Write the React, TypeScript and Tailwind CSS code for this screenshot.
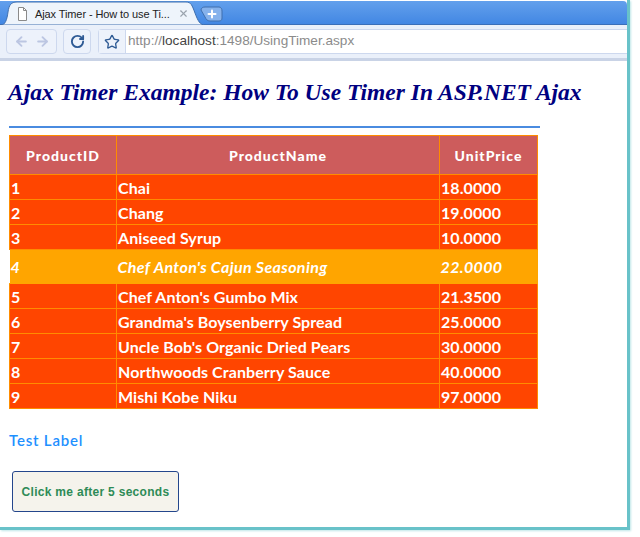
import { ArrowLeft, ArrowRight, RotateCw, Star, X, Plus } from 'lucide-react';

const rows = [
    { id: 1, name: 'Chai', price: '18.0000' },
    { id: 2, name: 'Chang', price: '19.0000' },
    { id: 3, name: 'Aniseed Syrup', price: '10.0000' },
    { id: 4, name: "Chef Anton's Cajun Seasoning", price: '22.0000', selected: true },
    { id: 5, name: "Chef Anton's Gumbo Mix", price: '21.3500' },
    { id: 6, name: "Grandma's Boysenberry Spread", price: '25.0000' },
    { id: 7, name: "Uncle Bob's Organic Dried Pears", price: '30.0000' },
    { id: 8, name: 'Northwoods Cranberry Sauce', price: '40.0000' },
    { id: 9, name: 'Mishi Kobe Niku', price: '97.0000' },
];

const comic = "font-['Lato','Open_Sans',sans-serif]";
const headCell = 'border border-[#ff8c00] text-center font-black text-[14px] tracking-[1px]';

function Browser() {
    return (
        <div className="shrink-0">
            {/* Tab strip */}
            <div className="relative h-[24px] mt-px rounded-tr-sm bg-gradient-to-b from-[#63a0ec] to-[#4287e3] border-b border-[#3a6fb8]">
                <svg className="absolute left-0 top-0" width="225" height="24" viewBox="0 0 225 24">
                    <path d="M1 24 C5 24 7 19 8 11 C9 4 11 1 17 1 L186 1 C191 1 192 4 195 12 C198 20 200 24 205 24 Z" fill="#eef4fb" stroke="#3f6fae" strokeWidth="1" />
                    <path d="M201 9 C201 7 203 6 205 6 L219 6 C221 6 222 8 222 10 L222 17 C222 19 221 20 219 20 L210 20 C207 20 206 18 205 16 Z" fill="#86b2ec" stroke="#3f6fae" strokeWidth="1" />
                </svg>
                <svg className="absolute left-[18px] top-[6px]" width="9" height="14" viewBox="0 0 9 14">
                    <path d="M0.5 0.5 H5.5 L8.5 3.5 V13.5 H0.5 Z" fill="#fff" stroke="#8a8a8a" />
                    <path d="M5.5 0.5 V3.5 H8.5" fill="none" stroke="#8a8a8a" />
                </svg>
                <span className="absolute left-[35px] top-[5px] text-[11px] leading-[16px] tracking-[-0.1px] text-[#222] font-['Liberation_Sans',sans-serif] whitespace-nowrap">
                    Ajax Timer - How to use Ti...
                </span>
                <X className="absolute left-[178px] top-[7px] text-[#9aa3ad]" size={11} strokeWidth={2.5} />
                <Plus className="absolute left-[206px] top-[7px] text-white" size={12} strokeWidth={4} />
            </div>
            {/* Toolbar */}
            <div className="h-[36px] flex items-center pl-[6px] bg-[#eaf0fa] border-b-[3px] border-[#c9d3e6]">
                <div className="w-[51px] h-[25px] flex items-center justify-center gap-[6px] rounded-[4px] border border-[#cdd8ee] bg-[#edf2fb]">
                    <ArrowLeft size={15} strokeWidth={3} className="text-[#bcc6e2]" />
                    <ArrowRight size={15} strokeWidth={3} className="text-[#bcc6e2]" />
                </div>
                <div className="ml-[6px] w-[28px] h-[25px] flex items-center justify-center rounded-[4px] border border-[#cdd8ee] bg-[#edf2fb]">
                    <RotateCw size={15} strokeWidth={3} className="text-[#2e5a94]" />
                </div>
                <div className="ml-[7px] flex-1 h-[25px] flex items-center rounded-l-[4px] border-y border-l border-[#cdd8ee] bg-white">
                    <div className="w-[27px] h-full flex items-center justify-center bg-[#edf2fb] border-r border-[#cdd8ee]">
                        <Star size={16} strokeWidth={2} className="text-[#2e5a94]" />
                    </div>
                    <span className="ml-[2px] text-[13.6px] text-[#8b8b8b] font-['Liberation_Sans',sans-serif] whitespace-nowrap">
                        http://<span className="text-[#444]">localhost</span>:1498/UsingTimer.aspx
                    </span>
                </div>
            </div>
        </div>
    );
}

function ProductTable() {
    return (
        <table className={`ml-[9px] mt-[7px] w-[529px] table-fixed border-collapse text-white font-bold text-[16px] tracking-[0.08px] ${comic}`}>
            <thead>
                <tr className="h-[39px] bg-[#cd5c5c]">
                    <th className={`w-[107px] ${headCell}`}>ProductID</th>
                    <th className={`w-[323px] ${headCell}`}>ProductName</th>
                    <th className={headCell}>UnitPrice</th>
                </tr>
            </thead>
            <tbody>
                {rows.map((row) => {
                    const rowCls = row.selected ? 'h-[34px] bg-[#ffa500] italic tracking-[0.36px]' : 'h-[25px] bg-[#ff4500]';
                    const cellCls = row.selected
                        ? 'border-y border-[#ffa500] pl-px pr-0 py-0 leading-none'
                        : 'border border-[#ff8c00] pl-px pr-0 pt-px pb-0 leading-none';
                    return (
                        <tr key={row.id} className={rowCls}>
                            <td className={cellCls}>{row.id}</td>
                            <td className={cellCls}>{row.name}</td>
                            <td className={cellCls}>{row.price}</td>
                        </tr>
                    );
                })}
            </tbody>
        </table>
    );
}

export default function App() {
    return (
        <div className="w-[640px] h-[537px] bg-white overflow-hidden">
            <div className="w-[630px] h-[530px] border-r-[3px] border-b-[3px] border-[#68c2c9] flex flex-col shadow-[1px_1px_2px_#bfe6e8]">
                <Browser />
                <h1 className="ml-[8px] mt-[16px] h-[30px] text-[23.5px] leading-[30px] font-bold italic text-[#000080] whitespace-nowrap font-['Liberation_Serif',serif]">
                    Ajax Timer Example: How To Use Timer In ASP.NET Ajax
                </h1>
                <div className="ml-[9px] mt-[19px] w-[531px] h-[2px] bg-[#4a8be0]" />
                <ProductTable />
                <div className={`ml-[9px] mt-[22px] text-[15px] leading-[18px] font-semibold tracking-[0.8px] text-[#1e90ff] ${comic}`}>Test Label</div>
                <button className="ml-[12px] mt-[22px] w-[167px] h-[41px] rounded-[3px] border border-[#24468c] bg-[#f5f3ec] text-[12px] font-bold tracking-[0.3px] text-[#2e8b57] font-['Liberation_Sans',sans-serif]">
                    Click me after 5 seconds
                </button>
            </div>
        </div>
    );
}
